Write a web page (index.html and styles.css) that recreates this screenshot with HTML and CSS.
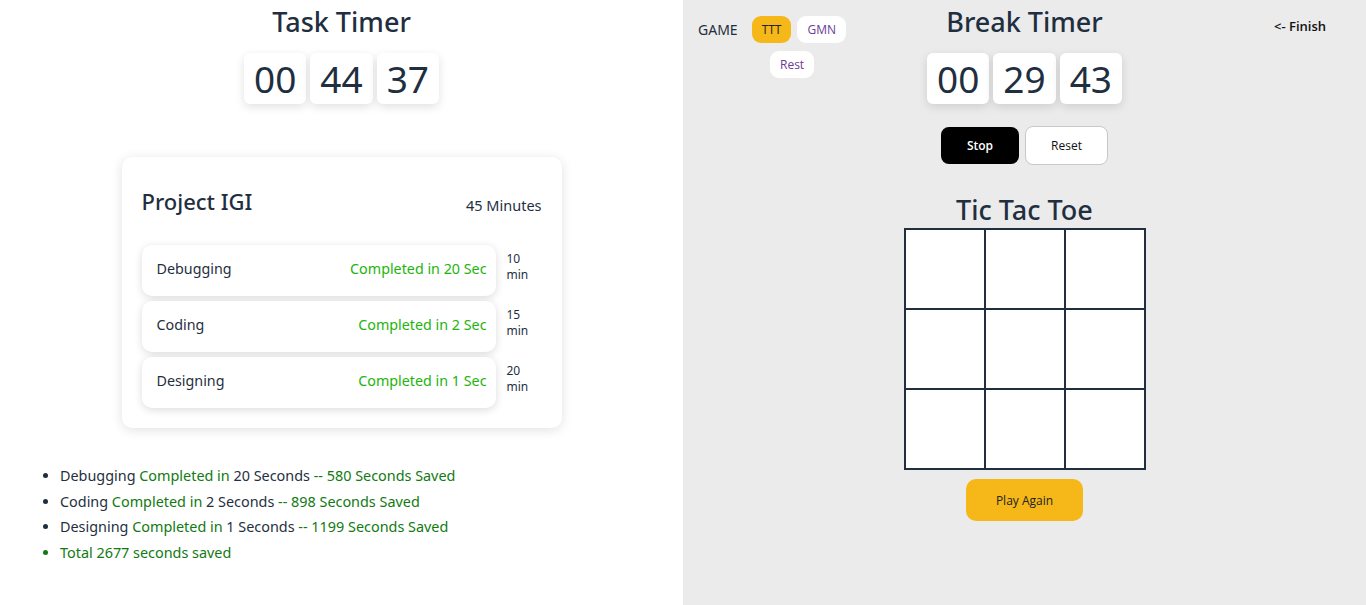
FILE: index.html
```html
<!DOCTYPE html>
<html>
<head>
<meta charset="utf-8">
<link rel="stylesheet" href="styles.css">
</head>
<body>
<div class="page">
  <section class="left">
    <h1 class="title">Task Timer</h1>
    <div class="timer">
      <span class="digit">00</span>
      <span class="digit">44</span>
      <span class="digit">37</span>
    </div>
    <div class="card">
      <div class="card-head">
        <h2 class="project">Project IGI</h2>
        <span class="total">45 Minutes</span>
      </div>
      <div class="tasks">
        <div class="task-line">
          <div class="task"><span class="task-name">Debugging</span><span class="done">Completed in 20 Sec</span></div>
          <span class="mins">10<br>min</span>
        </div>
        <div class="task-line">
          <div class="task"><span class="task-name">Coding</span><span class="done">Completed in 2 Sec</span></div>
          <span class="mins">15<br>min</span>
        </div>
        <div class="task-line">
          <div class="task"><span class="task-name">Designing</span><span class="done">Completed in 1 Sec</span></div>
          <span class="mins">20<br>min</span>
        </div>
      </div>
    </div>
    <ul class="summary">
      <li>Debugging <span class="g">Completed in</span> 20 Seconds <span class="g">-- 580 Seconds Saved</span></li>
      <li>Coding <span class="g">Completed in</span> 2 Seconds <span class="g">-- 898 Seconds Saved</span></li>
      <li>Designing <span class="g">Completed in</span> 1 Seconds <span class="g">-- 1199 Seconds Saved</span></li>
      <li class="tot">Total 2677 seconds saved</li>
    </ul>
  </section>
  <section class="right">
    <div class="games">
      <div class="games-row">
        <span class="game-label">GAME</span>
        <button class="chip active">TTT</button>
        <button class="chip">GMN</button>
      </div>
      <div class="games-row second">
        <button class="chip">Rest</button>
      </div>
    </div>
    <div class="center">
      <h1 class="title">Break Timer</h1>
      <div class="timer">
        <span class="digit">00</span>
        <span class="digit">29</span>
        <span class="digit">43</span>
      </div>
      <div class="controls">
        <button class="btn stop">Stop</button>
        <button class="btn reset">Reset</button>
      </div>
      <h2 class="ttt-title">Tic Tac Toe</h2>
      <div class="board">
        <div class="cell"></div><div class="cell"></div><div class="cell"></div>
        <div class="cell"></div><div class="cell"></div><div class="cell"></div>
        <div class="cell"></div><div class="cell"></div><div class="cell"></div>
      </div>
      <button class="play">Play Again</button>
    </div>
    <div class="finish-wrap"><a class="finish">&lt;- Finish</a></div>
  </section>
</div>
</body>
</html>
```
FILE: styles.css
```css
* { box-sizing: border-box; }
html, body { margin: 0; padding: 0; }
body {
  font-family: "Noto Sans", "Open Sans", sans-serif;
  color: #1f2f3f;
  background: #fff;
}
.page {
  display: grid;
  grid-template-columns: 683px 683px;
  height: 605px;
  overflow: hidden;
}
.left {
  background: #fff;
  display: flex;
  flex-direction: column;
  align-items: center;
}
.title {
  margin: 0;
  padding-top: 4px;
  font-size: 27px;
  line-height: 36px;
  font-weight: 500;
  color: #1f2f3f;
}
.timer {
  display: flex;
  gap: 4px;
  margin-top: 13px;
}
.digit {
  display: block;
  height: 51px;
  padding: 0 10px;
  background: #fff;
  border-radius: 6px;
  box-shadow: 0 3px 10px rgba(0,0,0,0.12);
  font-size: 37px;
  line-height: 51px;
  color: #1f2f3f;
}
.card {
  margin-top: 53px;
  width: 440px;
  background: #fff;
  border-radius: 10px;
  box-shadow: 0 2px 12px rgba(0,0,0,0.12);
  padding: 28px 20px 20px 20px;
}
.card-head {
  display: flex;
  justify-content: space-between;
  align-items: baseline;
}
.project {
  margin: 0;
  font-size: 22px;
  line-height: 32px;
  font-weight: 500;
}
.total {
  font-size: 14.5px;
  position: relative;
  top: 1px;
}
.tasks {
  margin-top: 28px;
  display: flex;
  flex-direction: column;
  gap: 5px;
}
.task-line {
  display: flex;
  align-items: flex-start;
}
.task {
  width: 354px;
  height: 51px;
  background: #fff;
  border-radius: 10px;
  box-shadow: 0 2px 8px rgba(0,0,0,0.14);
  display: flex;
  justify-content: space-between;
  align-items: center;
  padding: 0 9px 5px 15px;
  font-size: 14.3px;
}
.done { color: #1db40c; }
.mins {
  margin-left: 11px;
  margin-top: 6px;
  font-size: 12px;
  line-height: 16px;
}
.summary {
  align-self: flex-start;
  margin: 35px 0 0 0;
  padding-left: 60px;
  font-size: 14.4px;
  line-height: 25.5px;
}
.summary li::marker { font-size: 14px; }
.g { color: #117a11; }
.tot { color: #117a11; }
.right {
  background: #ebebeb;
  display: grid;
  grid-template-columns: 1fr auto 1fr;
  padding: 0 15px;
}
.games {
  padding-top: 16px;
  display: flex;
  flex-direction: column;
  gap: 8px;
}
.games-row {
  display: flex;
  align-items: center;
  gap: 6px;
}
.games-row.second { padding-left: 72px; }
.game-label {
  font-size: 14px;
  margin-right: 8px;
}
.chip {
  font-family: "Open Sans", "Noto Sans", sans-serif;
  border: none;
  background: #fff;
  color: #6b3b96;
  font-size: 12px;
  height: 27px;
  padding: 0 10px;
  border-radius: 9px;
}
.chip.active { background: #f5b818; color: #222; }
.center {
  display: flex;
  flex-direction: column;
  align-items: center;
}
.controls {
  display: flex;
  gap: 6px;
  margin-top: 22px;
  align-items: center;
}
.btn {
  font-family: "Open Sans", "Noto Sans", sans-serif;
  font-size: 12px;
  border-radius: 8px;
  cursor: pointer;
}
.stop {
  width: 78px;
  height: 37px;
  background: #000;
  color: #fff;
  border: none;
  font-weight: 600;
}
.reset {
  width: 83px;
  height: 39px;
  background: #fff;
  color: #111;
  border: 1px solid #c8c8c8;
}
.ttt-title {
  margin: 27px 0 0 0;
  font-size: 27px;
  line-height: 36px;
  font-weight: 500;
}
.board {
  display: grid;
  grid-template-columns: repeat(3, 80px);
  grid-template-rows: repeat(3, 80px);
  border: 1px solid #1f2f3f;
}
.cell {
  background: #fff;
  border: 1px solid #1f2f3f;
}
.play {
  font-family: "Open Sans", "Noto Sans", sans-serif;
  margin-top: 9px;
  width: 117px;
  height: 42px;
  background: #f5b818;
  color: #222;
  border: none;
  border-radius: 10px;
  font-size: 12px;
}
.finish-wrap {
  display: flex;
  justify-content: flex-end;
  padding-top: 17px;
  padding-right: 25px;
}
.finish {
  font-family: "Open Sans", "Noto Sans", sans-serif;
  font-size: 13px;
  font-weight: 600;
  color: #111;
  height: 16px;
}
```
